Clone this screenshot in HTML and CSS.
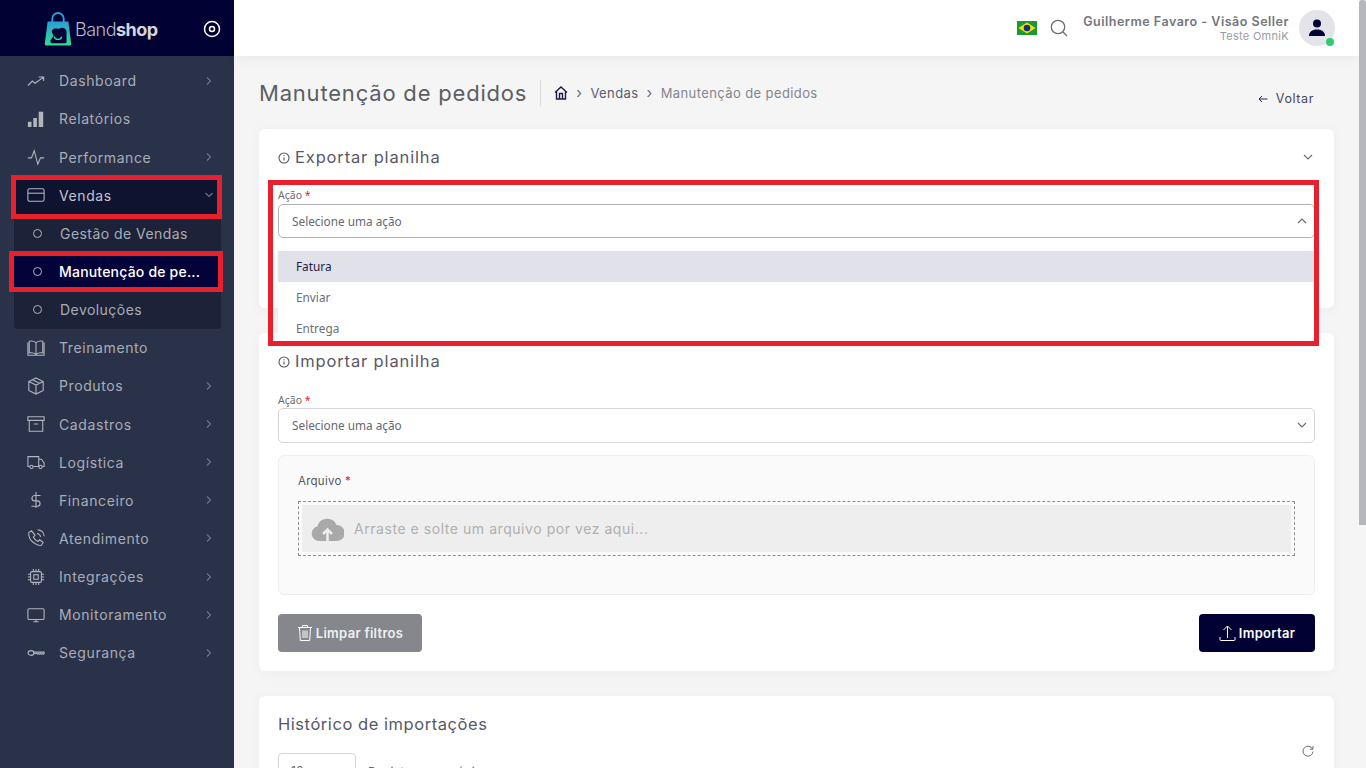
FILE: index.html
```html
<!DOCTYPE html>
<html lang="pt-BR">
<head>
<meta charset="utf-8">
<title>Manutenção de pedidos</title>
<link rel="stylesheet" href="styles.css">
</head>
<body>
<div class="app">
  <aside class="sidebar">
    <div class="brand">
      <div class="logo">
        <svg class="logo-bag" width="30" height="34" viewBox="0 0 30 36">
          <defs><linearGradient id="bag" x1="0" y1="0" x2="0" y2="1"><stop offset="0" stop-color="#2a9fd6"/><stop offset="1" stop-color="#2fe08a"/></linearGradient></defs>
          <path d="M9 11V7a6 6 0 0 1 12 0v4" fill="none" stroke="#2a9fd6" stroke-width="2"/>
          <path d="M4 10h22l3 24a1.500 1.500 0 0 1-1.500 1.500H2.500A1.500 1.500 0 0 1 1 34z" fill="url(#bag)"/>
          <path d="M9 19c3-3 6 0 9-2 3-1 6 1 6 4v11a1 1 0 0 1-1 1H9c-2 0-2-1-2-3l3-4c1-2-3-5-1-7z" fill="#020238"/>
          <path d="M11 26c1 4 7 4 8 0" fill="none" stroke="#2fe08a" stroke-width="1.500"/>
        </svg>
        <span class="logo-text">Band<b>shop</b></span>
      </div>
      <svg class="brand-toggle" width="18" height="18" viewBox="0 0 18 18"><circle cx="9" cy="9" r="7.500" fill="none" stroke="#fff" stroke-width="1.500"/><circle cx="9" cy="9" r="2.500" fill="none" stroke="#fff" stroke-width="1.500"/></svg>
    </div>
    <nav class="nav">
      <a class="nav-item"><svg class="ico" viewBox="0 0 20 20"><path d="M1 15l5-5 3 2.500L18 6M13 5.500h5.500V10"/></svg><span class="nav-label">Dashboard</span><svg class="chev" viewBox="0 0 10 10"><path d="M3 1.500L6.500 5 3 8.500"/></svg></a>
      <a class="nav-item"><svg class="ico ico-fill" viewBox="0 0 20 20"><path d="M1 13h4v6H1zM7 9h4v10H7zM13 2h5v17h-5z"/></svg><span class="nav-label">Relatórios</span></a>
      <a class="nav-item"><svg class="ico" viewBox="0 0 20 20"><path d="M1 11h4l3-8 4 15 3-7h4"/></svg><span class="nav-label">Performance</span><svg class="chev" viewBox="0 0 10 10"><path d="M3 1.500L6.500 5 3 8.500"/></svg></a>
      <a class="nav-item nav-open"><svg class="ico" viewBox="0 0 20 20"><rect x="1" y="3" width="18" height="14" rx="2"/><path d="M1 8h18"/></svg><span class="nav-label">Vendas</span><svg class="chev" viewBox="0 0 10 10"><path d="M1.500 3L5 6.500 8.500 3"/></svg></a>
      <div class="submenu">
        <a class="sub-item"><span class="dot"></span><span class="sub-label">Gestão de Vendas</span></a>
        <a class="sub-item sub-active"><span class="dot"></span><span class="sub-label">Manutenção de pe...</span></a>
        <a class="sub-item"><span class="dot"></span><span class="sub-label">Devoluções</span></a>
      </div>
      <a class="nav-item"><svg class="ico" viewBox="0 0 20 20"><path d="M10 4C8 2.500 5 2 2.500 2.500v13c2.500-.5 5.500 0 7.500 1.500 2-1.500 5-2 7.500-1.500v-13C15 2 12 2.500 10 4zM10 4v13M1 4v14h18V4"/></svg><span class="nav-label">Treinamento</span></a>
      <a class="nav-item"><svg class="ico" viewBox="0 0 20 20"><path d="M10 1l8 4v10l-8 4-8-4V5zM2 5l8 4 8-4M10 9v10M6 3l8 4"/></svg><span class="nav-label">Produtos</span><svg class="chev" viewBox="0 0 10 10"><path d="M3 1.500L6.500 5 3 8.500"/></svg></a>
      <a class="nav-item"><svg class="ico" viewBox="0 0 20 20"><path d="M1 2h18v4H1zM2.500 6v12h15V6M7.500 10h5"/></svg><span class="nav-label">Cadastros</span><svg class="chev" viewBox="0 0 10 10"><path d="M3 1.500L6.500 5 3 8.500"/></svg></a>
      <a class="nav-item"><svg class="ico" viewBox="0 0 20 20"><path d="M3 15H1V4h12v11H7M13 7h3l3 4v4h-2M13 15h0"/><circle cx="5" cy="15.500" r="1.800"/><circle cx="15" cy="15.500" r="1.800"/></svg><span class="nav-label">Logística</span><svg class="chev" viewBox="0 0 10 10"><path d="M3 1.500L6.500 5 3 8.500"/></svg></a>
      <a class="nav-item"><svg class="ico" viewBox="0 0 20 20"><path d="M15 5H8.500a3 3 0 0 0 0 6h3a3 3 0 0 1 0 6H5M10 1v18"/></svg><span class="nav-label">Financeiro</span><svg class="chev" viewBox="0 0 10 10"><path d="M3 1.500L6.500 5 3 8.500"/></svg></a>
      <a class="nav-item"><svg class="ico" viewBox="0 0 20 20"><path d="M5 2L2 4c-1 4 2 9 5 11s7 4 9 3l2-3-4-3-2 2c-2-1-4-3-5-5l2-2zM11 5c2 0 4 2 4 4M12 1c4 0 7 3 7 7"/></svg><span class="nav-label">Atendimento</span><svg class="chev" viewBox="0 0 10 10"><path d="M3 1.500L6.500 5 3 8.500"/></svg></a>
      <a class="nav-item"><svg class="ico" viewBox="0 0 20 20"><rect x="4" y="4" width="12" height="12" rx="1.500"/><rect x="7.500" y="7.500" width="5" height="5"/><path d="M7 1v3M10 1v3M13 1v3M7 16v3M10 16v3M13 16v3M1 7h3M1 10h3M1 13h3M16 7h3M16 10h3M16 13h3"/></svg><span class="nav-label">Integrações</span><svg class="chev" viewBox="0 0 10 10"><path d="M3 1.500L6.500 5 3 8.500"/></svg></a>
      <a class="nav-item"><svg class="ico" viewBox="0 0 20 20"><rect x="1" y="3" width="18" height="12" rx="1.500"/><path d="M7 17.500h6M10 15v2"/></svg><span class="nav-label">Monitoramento</span><svg class="chev" viewBox="0 0 10 10"><path d="M3 1.500L6.500 5 3 8.500"/></svg></a>
      <a class="nav-item"><svg class="ico" viewBox="0 0 20 20"><ellipse cx="4.500" cy="10" rx="3.200" ry="2.600"/><path d="M7.700 9H19v1.500l-1 1-1-1-1 1-1-1-1 1-1-1-1 1-1-1H7.700"/></svg><span class="nav-label">Segurança</span><svg class="chev" viewBox="0 0 10 10"><path d="M3 1.500L6.500 5 3 8.500"/></svg></a>
    </nav>
  </aside>

  <div class="main">
    <header class="topbar">
      <svg class="flag" width="20" height="14" viewBox="0 0 20 14"><rect width="20" height="14" fill="#169b39"/><path d="M10 1.500L18.500 7 10 12.500 1.500 7z" fill="#fedf00"/><circle cx="10" cy="7" r="3.300" fill="#1a2f7a"/></svg>
      <svg class="search" width="18" height="18" viewBox="0 0 18 18"><circle cx="8" cy="8" r="6.700"/><path d="M13 13l4 4"/></svg>
      <div class="user">
        <div class="user-name">Guilherme Favaro - Visão Seller</div>
        <div class="user-org">Teste OmniK</div>
      </div>
      <div class="avatar">
        <svg width="18" height="18" viewBox="0 0 18 18"><circle cx="9" cy="4.500" r="4" fill="#010133"/><path d="M1 17c0-4 3-6.500 8-6.500s8 2.500 8 6.500z" fill="#010133"/></svg>
        <span class="status"></span>
      </div>
    </header>

    <main class="content">
      <div class="page-head">
        <h1 class="page-title">Manutenção de pedidos</h1>
        <div class="crumbs">
          <svg class="home" width="14" height="14" viewBox="0 0 14 14"><path d="M1 6.500L7 1l6 5.500M2.500 5.500V13h9V5.500M5.500 13V7.500h3V13"/></svg>
          <span class="sep">›</span><span class="crumb">Vendas</span><span class="sep">›</span><span class="crumb-current">Manutenção de pedidos</span>
        </div>
        <a class="back"><svg width="10" height="10" viewBox="0 0 10 10"><path d="M9.500 5H1M4 2L1 5l3 3"/></svg>Voltar</a>
      </div>

      <section class="card card-export">
        <div class="card-head">
          <svg class="info" width="12" height="12" viewBox="0 0 12 12"><circle cx="6" cy="6" r="5"/><path d="M6 5.500v3M6 3.300v1"/></svg>
          <h2 class="card-title">Exportar planilha</h2>
          <svg class="caret caret-head" viewBox="0 0 10 10"><path d="M1 3l4 4 4-4"/></svg>
        </div>
        <label class="field-label">Ação <em>*</em></label>
        <div class="select select-open">
          <span>Selecione uma ação</span>
          <svg class="caret" viewBox="0 0 10 10"><path d="M1 7l4-4 4 4"/></svg>
          <ul class="options">
            <li class="option option-active">Fatura</li>
            <li class="option">Enviar</li>
            <li class="option">Entrega</li>
          </ul>
        </div>
      </section>

      <section class="card card-import">
        <div class="card-head">
          <svg class="info" width="12" height="12" viewBox="0 0 12 12"><circle cx="6" cy="6" r="5"/><path d="M6 5.500v3M6 3.300v1"/></svg>
          <h2 class="card-title">Importar planilha</h2>
        </div>
        <label class="field-label">Ação <em>*</em></label>
        <div class="select">
          <span>Selecione uma ação</span>
          <svg class="caret" viewBox="0 0 10 10"><path d="M1 3l4 4 4-4"/></svg>
        </div>
        <div class="file-box">
          <div class="file-label">Arquivo <em>*</em></div>
          <div class="drop">
            <div class="drop-inner">
              <svg class="cloud" width="33" height="24" viewBox="0 0 33 24"><path d="M8 24a7.500 7.500 0 0 1-1.500-14.800A10 10 0 0 1 25.500 8 8 8 0 0 1 26 24z" fill="#a9a9a9"/><path d="M16.500 24v-10M12 17l4.500-4.500L21 17" fill="none" stroke="#eee" stroke-width="2.500"/></svg>
              <span class="drop-text">Arraste e solte um arquivo por vez aqui...</span>
            </div>
          </div>
        </div>
        <div class="actions">
          <button class="btn btn-clear">
            <svg width="16" height="18" viewBox="0 0 16 18"><path d="M1 3.500h14M5.500 3V1.500h5V3M2.500 3.500l.8 13h9.400l.8-13M6 6.500v7.500M8 6.500v7.500M10 6.500v7.500"/></svg>
            Limpar filtros
          </button>
          <button class="btn btn-import">
            <svg width="17" height="17" viewBox="0 0 17 17"><path d="M8.500 13V1.500M4.500 5l4-4 4 4M1 12v2.500a1 1 0 0 0 1 1h13a1 1 0 0 0 1-1V12"/></svg>
            Importar
          </button>
        </div>
      </section>

      <section class="card card-history">
        <h2 class="history-title">Histórico de importações</h2>
        <svg class="refresh" width="12" height="12" viewBox="0 0 12 12"><path d="M10.500 4A5 5 0 1 0 11 6.500M11 1v3.200H7.800"/></svg>
        <div class="history-row">
          <div class="page-size">10</div>
          <span class="page-size-label">Registros por página</span>
        </div>
      </section>
    </main>
  </div>

  <div class="scrollbar"><div class="thumb"></div></div>
</div>

<div class="mark mark-vendas"></div>
<div class="mark mark-manut"></div>
<div class="mark mark-select"></div>
</body>
</html>
```

FILE: styles.css
```css
* { box-sizing: border-box; }
html, body { margin: 0; height: 768px; overflow: hidden; }
body { font-family: "Inter", "Liberation Sans", sans-serif; background: #f5f5f6; color: #55565e; position: relative; }
h1, h2, ul { margin: 0; padding: 0; font-weight: 400; }
em { font-style: normal; color: #e0202c; }

.app { display: grid; grid-template-columns: 234px 1125px 7px; height: 768px; }

/* Sidebar */
.sidebar { background: #2a3249; display: flex; flex-direction: column; }
.brand { height: 56px; background: #010133; display: flex; align-items: center; padding: 2px 13px 0 43px; justify-content: space-between; }
.logo { display: flex; align-items: center; gap: 2px; }
.logo-text { font-family: "Inter", sans-serif; font-size: 18px; letter-spacing: -.5px; color: #b9bac2; font-weight: 300; margin-top: 1px; }
.logo-text b { font-weight: 700; color: #d5d5da; }
.nav { padding-top: 5.700px; display: flex; flex-direction: column; }
.nav-item { height: 38.150px; display: flex; align-items: center; margin: 0 13px 0 14px; padding-left: 13px; color: #a9adb7; font-size: 14px; letter-spacing: .6px; }
.nav-open { background: #0e1330; color: #c3c5cd; }
.nav-label { margin-left: 14px; flex: 1; }
.ico { width: 18px; height: 18px; fill: none; stroke: #b2b5bd; stroke-width: 1.200; flex: none; }
.ico-fill { fill: #b2b5bd; stroke: none; }
.chev { width: 10px; height: 10px; fill: none; stroke: #6f7585; stroke-width: 1.100; margin-right: 7px; flex: none; }
.submenu { margin: 0 13px 0 14px; background: #1c2238; border-radius: 0 0 4px 4px; display: flex; flex-direction: column; }
.sub-item { height: 38.150px; display: flex; align-items: center; padding-left: 19px; color: #a9adb7; font-size: 14px; letter-spacing: .45px; }
.sub-active { background: #03033a; color: #fff; font-weight: 500; letter-spacing: .2px; }
.sub-active .sub-label { margin-left: 17px; }
.dot { width: 9px; height: 9px; border: 1.300px solid #b2b5bd; border-radius: 50%; flex: none; }
.sub-label { margin-left: 18px; white-space: nowrap; }

/* Main */
.main { background: #f5f5f6; display: flex; flex-direction: column; min-width: 0; }
.topbar { height: 56px; flex: none; background: #fff; box-shadow: 0 2px 12px rgba(0,0,0,.06); display: flex; align-items: center; justify-content: flex-end; padding-right: 24px; }
.flag { margin-right: 13px; }
.search { fill: none; stroke: #6a6b72; stroke-width: 1.300; margin-right: 15px; }
.user { text-align: right; margin-right: 10px; }
.user-name { font-size: 12.500px; font-weight: 600; color: #74757c; letter-spacing: .51px; line-height: 16px; }
.user-org { font-size: 11px; color: #9a9ba2; letter-spacing: .3px; line-height: 13px; }
.avatar { width: 36px; height: 36px; border-radius: 50%; background: #e3e3e9; display: flex; align-items: center; justify-content: center; position: relative; }
.status { position: absolute; right: 1px; bottom: 0; width: 8px; height: 8px; border-radius: 50%; background: #2ecc71; }

.content { padding: 0 25px; display: flex; flex-direction: column; }
.page-head { height: 73px; display: flex; align-items: center; }
.page-title { font-size: 22px; letter-spacing: .8px; color: #5d5e63; line-height: 26px; padding-right: 13px; border-right: 1px solid #dcdcdf; margin-right: 13px; white-space: nowrap; }
.crumbs { display: flex; align-items: center; font-size: 13px; letter-spacing: .4px; }
.home { fill: none; stroke: #1b1b46; stroke-width: 1.400; }
.sep { margin: 0 8px; color: #6b6c75; font-size: 15px; line-height: 14px; }
.crumb { color: #5b5c6e; }
.crumb-current { color: #84858c; }
.back { margin-left: auto; margin-right: 20px; margin-top: 11px; font-size: 12.500px; color: #44455a; letter-spacing: .6px; display: flex; align-items: center; gap: 8px; }
.back svg { fill: none; stroke: #2a2a50; stroke-width: 1; margin-top: 2px; }

.card { background: #fff; border-radius: 6px; box-shadow: 0 2px 14px rgba(0,0,0,.04); padding: 0 19px; flex: none; }
.card-export { height: 179px; margin-bottom: 25px; }
.card-import { height: 338px; margin-bottom: 25px; }
.card-history { height: 200px; position: relative; }
.card-head { height: 56px; display: flex; align-items: center; gap: 5px; }
.info { fill: none; stroke: #55565e; stroke-width: 1.100; flex: none; margin-top: 2px; }
.card-title { font-size: 16.500px; letter-spacing: .85px; color: #585964; font-weight: 400; }
.caret { width: 10px; height: 10px; fill: none; stroke: #676873; stroke-width: 1.100; flex: none; }
.caret-head { margin-left: auto; margin-right: 2px; }
.field-label { display: block; font-family: "Noto Sans", sans-serif; font-size: 10.500px; color: #6b6c74; line-height: 14px; height: 15px; margin-top: 4px; }
.card-export .field-label { margin-top: 3px; }
.select { height: 35px; border: 1px solid #d5d5da; border-radius: 5px; display: flex; align-items: center; justify-content: space-between; padding: 0 7px 1px 13px; font-family: "Noto Sans", sans-serif; font-size: 11.800px; color: #676872; position: relative; background: #fff; }
.select-open { border-color: #b0b1bc; height: 34px; margin-top: 1px; padding-bottom: 0; }
.options { list-style: none; position: absolute; left: -1px; right: -1px; top: 46px; background: #fff; box-shadow: 0 2px 8px rgba(0,0,0,.06); border-radius: 4px 4px 0 0; z-index: 5; }
.option { height: 31px; display: flex; align-items: center; padding: 0 0 2px 18px; color: #6c6d76; }
.option-active { background: #e1e1e9; color: #1c1c44; }
.file-box { margin-top: 12px; height: 140px; background: #fafafa; border: 1px solid #eeeeee; border-radius: 6px; padding: 18px 19px; }
.file-label { font-size: 11.500px; color: #55565e; letter-spacing: .25px; line-height: 14px; }
.drop { margin-top: 13px; height: 55px; border: 1px dashed #8f8f8f; padding: 3px; }
.drop-inner { height: 47px; background: #eeeeee; display: flex; align-items: center; padding-left: 9px; gap: 10px; }
.drop-text { font-size: 14px; color: #b0b0b0; letter-spacing: .55px; }
.actions { margin-top: 19px; display: flex; justify-content: space-between; }
.btn { height: 38px; border: 0; border-radius: 4px; color: #fff; font-family: "Inter", sans-serif; font-size: 13px; letter-spacing: .3px; font-weight: 600; display: flex; align-items: center; justify-content: center; gap: 3px; padding: 0; }
.btn svg { fill: none; stroke: #fff; stroke-width: 1; }
.btn-clear { width: 144px; background: #85878c; color: #f0f0f1; }
.btn-import { width: 116px; background: #010133; }
.history-title { font-size: 16.500px; letter-spacing: .55px; color: #585964; padding-top: 18px; line-height: 20px; }
.refresh { position: absolute; right: 20px; top: 49px; fill: none; stroke: #6b6c72; stroke-width: 1; }
.history-row { display: flex; align-items: flex-start; margin-top: 19px; }
.page-size { width: 78px; height: 38px; border: 1px solid #d5d5da; border-radius: 4px; padding: 9px 0 0 12px; font-size: 12px; color: #66676f; }
.page-size-label { margin-left: 12px; margin-top: 11px; font-size: 12px; color: #66676f; letter-spacing: .2px; }

/* Scrollbar */
.scrollbar { background: #f5f5f6; }
.thumb { height: 525px; background: #b5b7bd; border-radius: 3px 3px 0 0; }

/* Red annotation frames laid over the screenshot */
.mark { position: absolute; border: 5px solid #e8202e; z-index: 10; pointer-events: none; }
.mark-vendas { left: 11px; top: 175px; width: 211px; height: 44px; }
.mark-manut { left: 9px; top: 251px; width: 214px; height: 41px; }
.mark-select { left: 268px; top: 180px; width: 1051px; height: 166px; }
```
